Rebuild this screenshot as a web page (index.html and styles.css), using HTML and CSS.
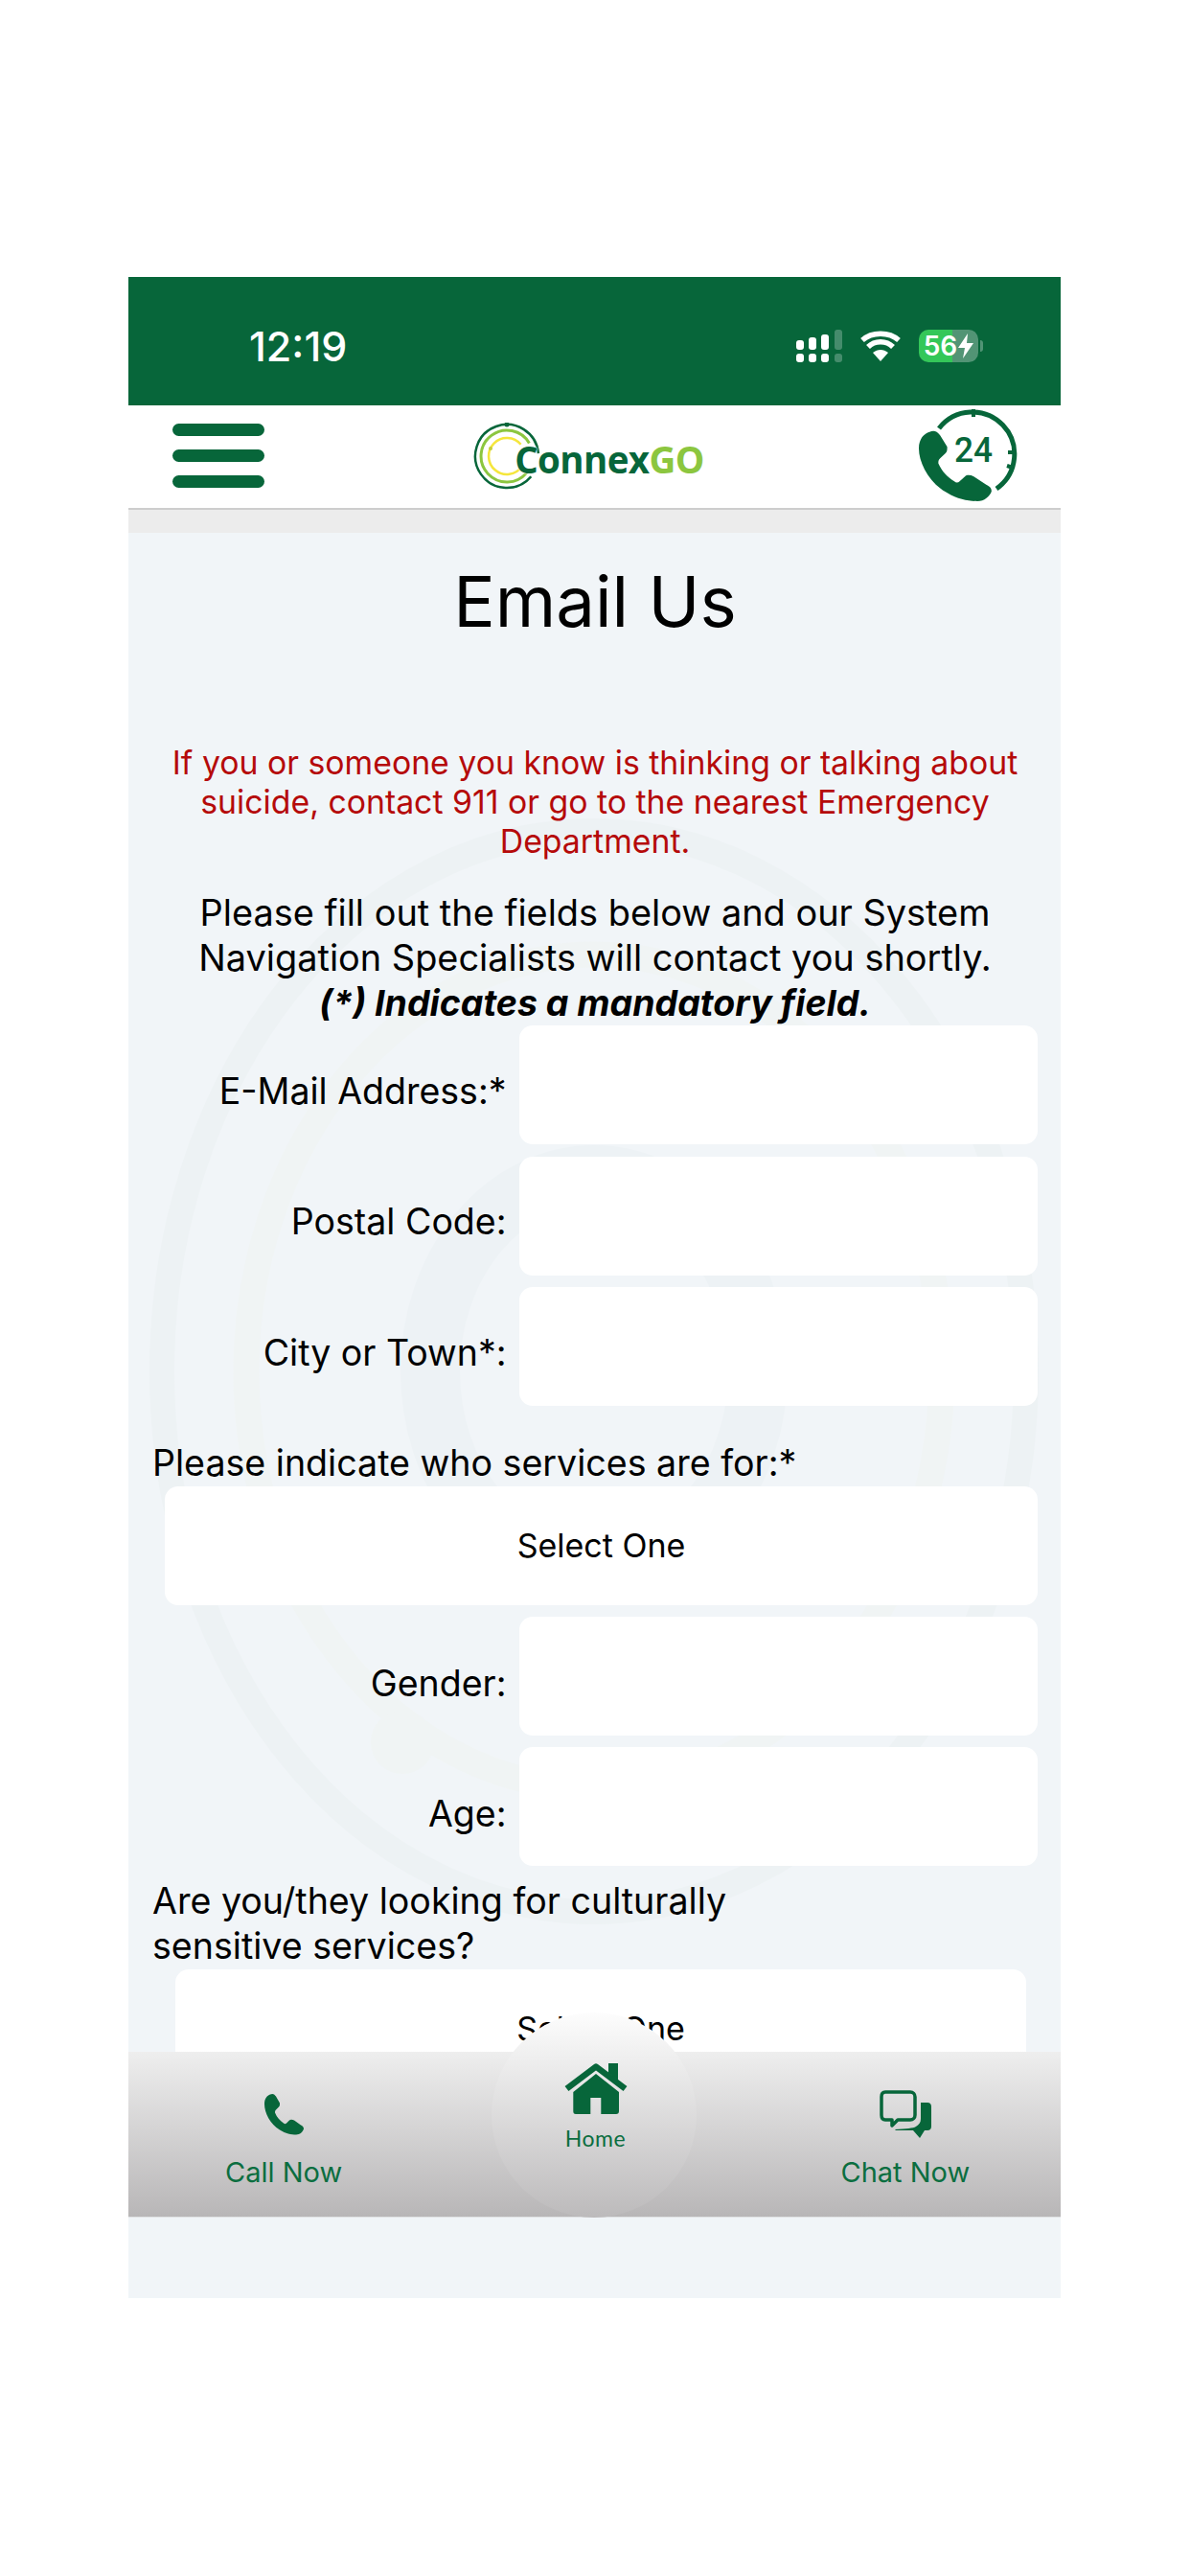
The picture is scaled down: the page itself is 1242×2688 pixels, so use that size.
FILE: index.html
```html
<!DOCTYPE html>
<html lang="en">
<head>
<meta charset="utf-8">
<title>Email Us</title>
<link rel="stylesheet" href="styles.css">
</head>
<body>
<div class="screen">
  <div class="status">
    <span class="clock">12:19</span>
    <div class="status-icons">
      <svg class="signal" width="48" height="34" viewBox="0 0 48 34">
        <g fill="#fff">
          <rect x="0" y="11" width="8" height="10" rx="3"/><rect x="0" y="25" width="8" height="9" rx="3"/>
          <rect x="13" y="8" width="8" height="13" rx="3"/><rect x="13" y="25" width="8" height="9" rx="3"/>
          <rect x="26" y="5" width="8" height="16" rx="3"/><rect x="26" y="25" width="8" height="9" rx="3"/>
        </g>
        <g fill="#fff" opacity=".25">
          <rect x="40" y="0" width="8" height="21" rx="3"/><rect x="40" y="25" width="8" height="9" rx="3"/>
        </g>
      </svg>
      <svg class="wifi" width="42" height="32" viewBox="0 0 42 32">
        <path d="M21 32 L13 23 C18 19 24 19 29 23 Z" fill="#fff"/>
        <path d="M8 17 C15 10 27 10 34 17" fill="none" stroke="#fff" stroke-width="5.5"/>
        <path d="M2 10 C12 1 30 1 40 10" fill="none" stroke="#fff" stroke-width="5.5"/>
      </svg>
      <div class="battery">
        <span class="battery-level">56</span>
        <svg width="16" height="26" viewBox="0 0 16 26"><path d="M10 0 L0 15 H7 L5 26 L16 10 H9 Z" fill="#fff"/></svg>
        <i class="battery-nub"></i>
      </div>
    </div>
  </div>

  <header class="topbar">
    <div class="burger"><i></i><i></i><i></i></div>
    <div class="logo">
      <svg class="logo-mark" width="70" height="70" viewBox="0 0 70 70">
        <g fill="none">
          <path d="M67.900 32.100 A33 33 0 1 0 60.300 56.200" stroke="#07663a" stroke-width="2.500"/>
          <path d="M58.400 21.500 A27 27 0 1 0 55.700 52.400" stroke="#8cc63f" stroke-width="3"/>
          <path d="M49.600 22.800 A19 19 0 1 0 50.600 45.900" stroke="#f5e63c" stroke-width="2.500"/>
        </g>
        <circle cx="35" cy="2" r="2.500" fill="#07663a"/>
        <circle cx="18" cy="27" r="2" fill="#c4cf3c"/>
      </svg>
      <span class="logo-text">Connex<b>GO</b></span>
    </div>
    <svg class="call24" width="104" height="97" viewBox="0 0 104 97">
      <path d="M21 21 A44 44 0 1 1 81 84" fill="none" stroke="#07663a" stroke-width="5"/>
      <path d="M57 1 V9 M102 46 H93 M98 62 L92 60" fill="none" stroke="#07663a" stroke-width="4"/>
      <path transform="translate(0 23) scale(1.85 1.72)" d="M6 1 C3 2 0 5 0 11 C0 20 6 32 16 38 C22 42 28 43 33 43 C37 43 40 40 41 37 C41 35 40 34 38 33 L31 28 C29 27 27 27 26 28 L23 31 C22 32 21 32 20 31 C16 28 13 25 11 20 C11 19 11 18 12 17 L15 14 C16 13 16 12 16 10 L12 3 C10 0 8 0 6 1 Z" fill="#07663a"/>
      <text x="57" y="56" class="call24-text" textLength="40" lengthAdjust="spacingAndGlyphs">24</text>
    </svg>
  </header>

  <main class="content">
    <svg class="watermark" viewBox="0 0 973 1600" preserveAspectRatio="none">
      <g fill="none">
        <ellipse cx="486" cy="875" rx="451" ry="564" stroke="#edf2f4" stroke-width="26"/>
        <ellipse cx="486" cy="875" rx="363" ry="435" stroke="#f0f4f4" stroke-width="27"/>
        <ellipse cx="486" cy="875" rx="171" ry="205" stroke="#edf2f5" stroke-width="62"/>
      </g>
      <circle cx="286" cy="1262" r="33" fill="#f0f4f4"/>
    </svg>
    <div class="content-inner">
      <h1 class="title">Email Us</h1>
      <p class="warning">If you or someone you know is thinking or talking about suicide, contact 911 or go to the nearest Emergency Department.</p>
      <p class="intro">Please fill out the fields below and our System Navigation Specialists will contact you shortly.<br><em>(*) Indicates a mandatory field.</em></p>

      <div class="rows">
        <div class="row"><label class="label">E-Mail Address:*</label><input class="field" type="text"></div>
        <div class="row"><label class="label">Postal Code:</label><input class="field" type="text"></div>
        <div class="row"><label class="label">City or Town*:</label><input class="field" type="text"></div>
      </div>

      <p class="question first">Please indicate who services are for:*</p>
      <div class="select">Select One</div>

      <div class="rows second">
        <div class="row"><label class="label">Gender:</label><input class="field" type="text"></div>
        <div class="row"><label class="label">Age:</label><input class="field" type="text"></div>
      </div>

      <p class="question">Are you/they looking for culturally<br>sensitive services?</p>
      <div class="select narrow">Select One</div>
    </div>

    <nav class="tabbar">
      <a class="tab">
        <svg width="41" height="50" viewBox="0 -3.500 41 50"><path d="M6 1 C3 2 0 5 0 11 C0 20 6 32 16 38 C22 42 28 43 33 43 C37 43 40 40 41 37 C41 35 40 34 38 33 L31 28 C29 27 27 27 26 28 L23 31 C22 32 21 32 20 31 C16 28 13 25 11 20 C11 19 11 18 12 17 L15 14 C16 13 16 12 16 10 L12 3 C10 0 8 0 6 1 Z" fill="#07663a"/></svg>
        <span>Call Now</span>
      </a>
      <a class="home">
        <svg width="66" height="53" viewBox="0 0 66 53">
          <path d="M9.300 30 L33 11 L57 30 V50 C57 52 56 53 54 53 H38.300 V36 H27.300 V53 H12 C10 53 9.300 52 9.300 50 Z" fill="#07663a"/>
          <path d="M46 0 H56 V18 L46 10 Z" fill="#07663a"/>
          <path d="M2.500 26.500 L33 3.500 L63.500 26.500" fill="none" stroke="#07663a" stroke-width="6.500" stroke-linejoin="round"/>
        </svg>
        <span>Home</span>
      </a>
      <a class="tab">
        <svg width="54" height="50" viewBox="0 0 54 50">
          <path d="M43 13 H50 C52.500 13 54 14.500 54 17 V38 C54 40.500 52.500 42 50 42 H47 L42 50 L35 42 H17 L16 41 C28 40 35 40 38 38 C41 36 43 34 43 30 Z" fill="#07663a"/>
          <path d="M6 2 H32 C35 2 37 4 37 7 V26 C37 29 35 31 32 31 H19 L13 37 V31 H6 C3 31 2 29 2 26 V7 C2 4 3 2 6 2 Z" fill="none" stroke="#07663a" stroke-width="3.500" stroke-linejoin="round"/>
        </svg>
        <span>Chat Now</span>
      </a>
    </nav>
  </main>
</div>
</body>
</html>
```
FILE: styles.css
```css
* { box-sizing: border-box; }
html, body { margin: 0; padding: 0; background: #fff; }
body { height: 2688px; overflow: hidden; font-family: Inter, "Liberation Sans", sans-serif; color: #000; }

.screen {
  width: 973px;
  height: 2109px;
  margin: 289px 0 0 134px;
  display: flex;
  flex-direction: column;
}

.status {
  height: 134px;
  background: #07663a;
  display: flex;
  justify-content: space-between;
  align-items: center;
  padding: 9px 86px 0 126px;
  flex: none;
}
.clock { color: #fff; font-size: 43px; font-weight: 500; }
.status-icons { display: flex; align-items: center; gap: 19px; }
.signal, .wifi { display: block; }
.battery {
  position: relative;
  width: 62px;
  height: 34px;
  border-radius: 10px;
  background: linear-gradient(90deg, #34c759 0 56%, rgba(255,255,255,.3) 56% 100%);
  display: flex;
  align-items: center;
  justify-content: center;
  gap: 1px;
  color: #fff;
}
.battery-level { font-size: 28px; font-weight: 600; }
.battery-nub {
  position: absolute;
  right: -5px;
  top: 11px;
  width: 3px;
  height: 12px;
  border-radius: 0 3px 3px 0;
  background: rgba(255,255,255,.3);
}

.topbar {
  height: 109px;
  flex: none;
  background: #fff;
  border-bottom: 2px solid #cdcdcd;
  display: flex;
  align-items: center;
  justify-content: space-between;
  padding: 0 47px 2px 46px;
}
.burger { display: flex; flex-direction: column; gap: 14px; width: 96px; }
.burger i { display: block; height: 13px; border-radius: 7px; background: #07663a; }
.logo { display: flex; align-items: center; margin-left: -6px; }
.logo-mark { display: block; margin-right: -27px; }
.logo-text { font-family: "Open Sans", sans-serif; font-weight: 700; font-size: 38.500px; letter-spacing: -.6px; color: #07663a; position: relative; top: 3px; text-shadow: 0 0 2px #fff, 0 0 2px #fff; }
.logo-text b { color: #8cc63f; font-weight: 700; }
.call24 { display: block; margin-top: -2px; margin-right: -3px; }
.call24-text { font-family: Roboto, sans-serif; font-size: 37px; font-weight: 500; fill: #07663a; text-anchor: middle; }

.content {
  position: relative;
  flex: 1;
  min-height: 0;
  overflow: hidden;
  background: #f1f5f8;
  border-top: 24px solid #ececec;
}
.watermark { position: absolute; left: 0; top: 0; width: 973px; height: 1600px; }
.content-inner { position: relative; padding: 22px 24px 0 25px; }

.title { margin: 0; font-size: 72.500px; font-weight: 400; line-height: 100px; text-align: center; }
.warning {
  margin: 97px 0 0;
  color: #b50a0a;
  font-size: 33.800px;
  line-height: 41px;
  text-align: center;
}
.intro { margin: 31px 0 0; font-size: 37.900px; line-height: 47px; text-align: center; }
.intro em { font-weight: 700; font-style: italic; font-size: 37.500px; }

.rows { display: flex; flex-direction: column; gap: 12.500px; }
.rows.second { margin-top: 12px; gap: 12px; }
.rows.second .label { padding-top: 15px; }
.row { display: flex; justify-content: flex-end; align-items: center; gap: 13.500px; }
.label { font-size: 37.500px; line-height: 47px; padding-top: 12px; white-space: nowrap; }
.field {
  width: 541px;
  height: 124px;
  flex: none;
  border: 0;
  border-radius: 14px;
  background: #fff;
  display: block;
}
.question { margin: 13px 0 0; font-size: 37.600px; line-height: 47.500px; }
.question.first { margin-top: 36px; }
.select {
  margin-left: 13px;
  height: 124px;
  border-radius: 14px;
  background: #fff;
  display: flex;
  align-items: center;
  justify-content: center;
  font-size: 34px;
}
.select.narrow { margin: 0 12px 0 24px; }

.tabbar {
  position: absolute;
  left: 0;
  right: 0;
  bottom: 84px;
  height: 173px;
  background: linear-gradient(180deg, #eeeeee 0%, #b8b6b7 100%);
  display: grid;
  grid-template-columns: 1fr 1fr 1fr;
  border-bottom: 1px solid #e0e2e4;
}
.tab {
  display: flex;
  flex-direction: column;
  align-items: center;
  justify-content: flex-end;
  padding-bottom: 29px;
  color: #0b6e40;
  font-size: 29px;
  gap: 18px;
}
.tab:first-child { grid-column: 1; }
.tab:last-child { grid-column: 3; }
.tab svg { display: block; }
.home {
  position: absolute;
  left: 379px;
  top: -41px;
  width: 214px;
  height: 214px;
  border-radius: 50%;
  background: linear-gradient(180deg, #fdfdfd 0%, #f0f0f0 20%, #bcbabb 100%);
  display: flex;
  flex-direction: column;
  align-items: center;
  padding: 53px 0 0 3px;
  gap: 11px;
  color: #0b6e40;
  font-family: Lato, sans-serif;
  font-size: 23px;
  letter-spacing: .6px;
}
.home svg { display: block; }
```
